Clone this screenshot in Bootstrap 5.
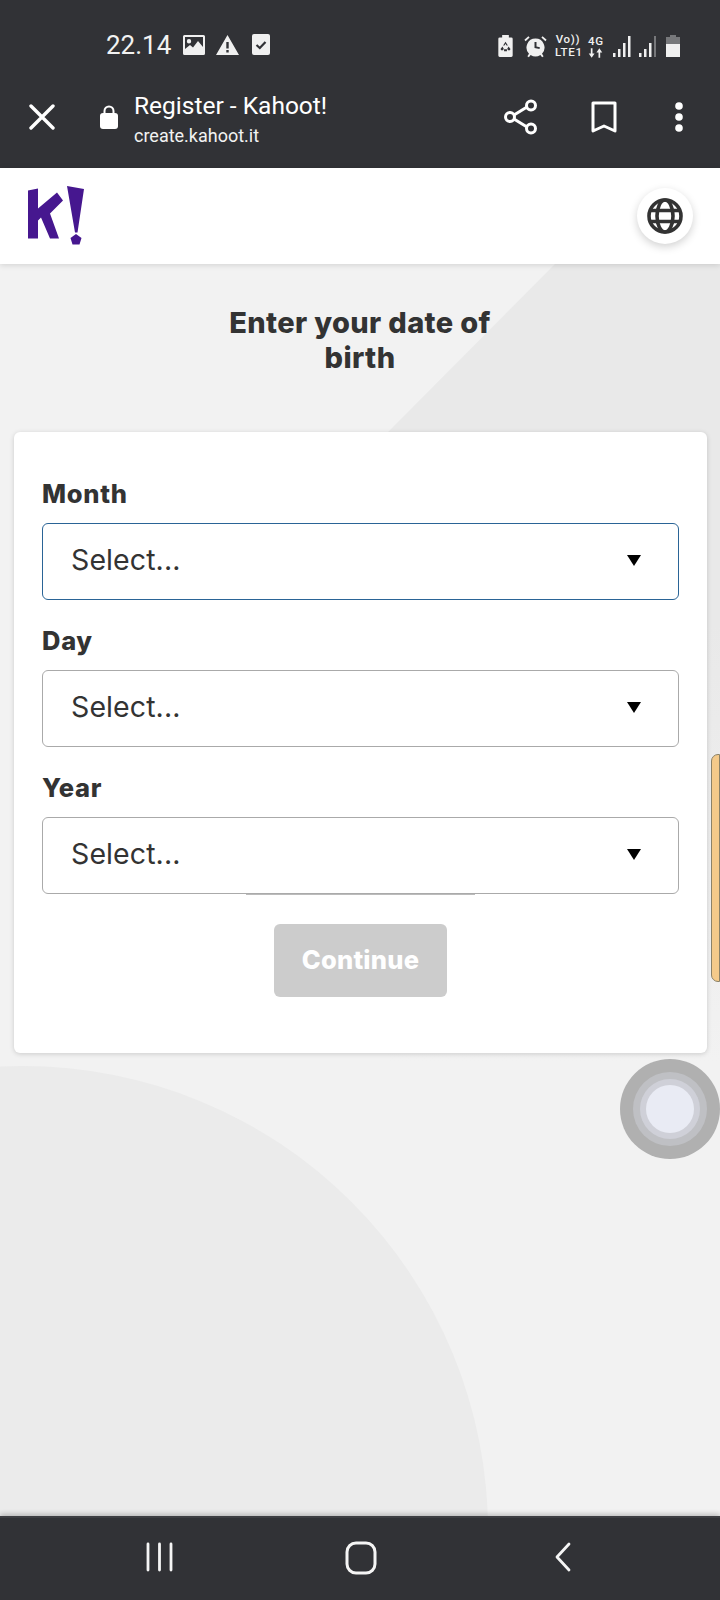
<!DOCTYPE html>
<html lang="en">
<head>
<meta charset="utf-8">
<title>Register - Kahoot!</title>
<link href="https://cdn.jsdelivr.net/npm/bootstrap@5.3.0/dist/css/bootstrap.min.css" rel="stylesheet">
<style>
html,body{margin:0;padding:0;background:#f2f2f2}
body{width:720px;height:1600px;overflow:hidden;font-family:Inter,"Liberation Sans",sans-serif;color:#333}
.phone-frame{width:720px;height:1600px;position:relative;overflow:hidden}
.dark-top{height:168px;background:#313236;color:#fff;font-family:Roboto,"Liberation Sans",sans-serif}
.status-row{height:84px;padding:25px 0 0 106px}
.status-time{font-size:26px;line-height:40px;color:#f2f2f2;width:68px}
.status-ic{display:block}
.browser-row{height:84px;padding-bottom:18px}
.b-title{font-size:24.5px;line-height:28px;color:#fff}
.b-sub{font-size:18px;line-height:22px;color:#f2f2f2;margin-top:5px}
.kh-header{height:96px;background:#fff;box-shadow:0 1px 6px rgba(0,0,0,.14);position:relative;z-index:3}
.globe-btn{width:56px;height:56px;border-radius:50%;background:#fff;box-shadow:0 3px 9px rgba(0,0,0,.18)}
.kh-main{height:1252px;position:relative;overflow:hidden;background:#f2f2f2}
.bg-tri{position:absolute;left:0;top:0;width:720px;height:800px}
.bg-circle{position:absolute;left:-442px;top:802px;width:930px;height:930px;border-radius:50%;background:#ebebeb}
.dob-title{position:relative;font-size:29px;font-weight:800;line-height:35px;text-align:center;width:300px;margin:0 auto;padding-top:41px;color:#333;letter-spacing:.35px}
.dob-card{position:absolute;left:14px;top:168px;width:693px;height:621px;background:#fff;border-radius:6px;box-shadow:0 1px 5px rgba(0,0,0,.16);padding:40px 28px 0}
.dob-label{font-size:25.5px;font-weight:800;line-height:44px;height:44px;color:#333;margin:0 0 7px;display:block;letter-spacing:.7px}
.dob-select{height:77px;border:1px solid #aaa;border-radius:6px;background:#fff;padding:0 28px 2px;margin-bottom:19px;font-size:28.5px;color:#333;letter-spacing:.1px}
.dob-select.is-on{border-color:#2a6496}
.dob-select.is-last{margin-bottom:0}
.dob-caret{width:0;height:0;border-left:7.5px solid transparent;border-right:7.5px solid transparent;border-top:11px solid #000;margin-right:9px}
.under-line{position:absolute;left:232px;top:462px;width:229px;height:1px;background:#bbb}
.dob-btn,.dob-btn:disabled{display:block;width:173px;height:73px;margin:30px auto 0;border:0;border-radius:6px;background:#ccc;color:#fff;font-size:25.5px;font-weight:800;padding:0;opacity:1;letter-spacing:.25px}
.edge-tab{position:absolute;right:0;top:490px;width:9px;height:228px;background:#f4ca8a;border:1px solid #8b8268;border-radius:7px 0 0 7px;z-index:4}
.assist{position:absolute;left:620px;top:795px;width:100px;height:100px;border-radius:50%;background:#b0b0b0;z-index:5}
.assist i{position:absolute;border-radius:50%;display:block}
.assist .r1{inset:13px;background:#bfc0c4}
.assist .r2{inset:20px;background:#cfd0d8}
.assist .r3{inset:26px;background:#e9ebf4}
.nav-sys{position:absolute;left:0;bottom:0;width:720px;height:84px;background:#313236;border-top:2px solid #3d3e42;box-shadow:0 -2px 5px rgba(0,0,0,.22);z-index:6}
.net-txt{color:#f0f0f0;font-size:11.5px;line-height:13px;font-weight:500;white-space:nowrap;text-align:center;letter-spacing:.7px}
</style>
</head>
<body>
<div class="phone-frame">
  <div class="dark-top">
    <div class="status-row d-flex align-items-start">
      <div class="status-time">22.14</div>
      <div class="d-flex align-items-center" style="gap:11px;margin:9px 0 0 9px">
        <svg class="status-ic" width="22" height="20" viewBox="0 0 22 20"><path fill="#f0f0f0" fill-rule="evenodd" d="M1.5 0h19A1.5 1.5 0 0 1 22 1.5v17a1.5 1.5 0 0 1-1.500 1.500h-19A1.500 1.500 0 0 1 0 18.500v-17A1.500 1.500 0 0 1 1.500 0ZM2 2v12l5-4 3 2.500L15 6l5 6V2ZM6 4a2.200 2.200 0 1 1 0 4.400A2.200 2.200 0 0 1 6 4Z"/></svg>
        <svg class="status-ic" width="23" height="20" viewBox="0 0 23 20"><path fill="#f0f0f0" fill-rule="evenodd" d="M11.500 0 23 20H0ZM10.300 7v6.500h2.400V7Zm0 8v2.400h2.400V15Z"/></svg>
        <svg class="status-ic" style="margin-left:2px" width="18" height="21" viewBox="0 0 18 21"><path fill="#f0f0f0" fill-rule="evenodd" d="M2 0h14a2 2 0 0 1 2 2v17a2 2 0 0 1-2 2H2a2 2 0 0 1-2-2V2a2 2 0 0 1 2-2Z"/><path fill="none" stroke="#313236" stroke-width="2.200" d="m4.500 11 3.300 3 5.700-6"/></svg>
      </div>
      <div class="d-flex align-items-center ms-auto" style="margin:8px 40px 0 0">
        <svg class="status-ic" width="15" height="22" viewBox="0 0 15 23"><path fill="#f0f0f0" d="M4 0h7v2.500h2.500A1.500 1.500 0 0 1 15 4v17.500a1.500 1.500 0 0 1-1.500 1.500h-12A1.500 1.500 0 0 1 0 21.500V4a1.500 1.500 0 0 1 1.500-1.500H4Z"/><path fill="#313236" d="M7.500 7 10 11H8.600L7.500 9.200 6.400 11H5ZM4.300 12l1.400 2.500-.8 1.500H3l-.7-1.300ZM10.700 12l2 2.700-.7 1.300h-1.900l-.8-1.500ZM6 15h3v2H6Z"/></svg>
        <svg class="status-ic" style="margin-left:11px" width="23" height="23" viewBox="0 0 23 23"><path fill="#f0f0f0" fill-rule="evenodd" d="M11.500 3.500a9 9 0 0 1 6.500 15.200l1.600 2.600-1.500.9-1.700-2.300a9 9 0 0 1-9.800 0l-1.700 2.300-1.500-.9L5 18.700A9 9 0 0 1 11.500 3.500Zm-1 3.500v6l5 1 .4-1.700-3.400-.7V7Z"/><path fill="none" stroke="#f0f0f0" stroke-width="1.800" d="M1 5.500 5 1.800M22 5.500 18 1.800"/></svg>
        <div class="net-txt" style="margin-left:8px;width:26px"><div>Vo))</div><div>LTE1</div></div>
        <div class="net-txt" style="margin-left:7px;width:15px"><div>4G</div><svg class="status-ic" width="15" height="10" viewBox="0 0 16 10"><path fill="#f0f0f0" d="M3 0h1.800v5.500H7L3.900 10 .8 5.500H3ZM11.200 10h1.800V4.500h2.200L12.100 0 9 4.500h2.200Z"/></svg></div>
        <svg class="status-ic" style="margin-left:10px" width="18" height="21" viewBox="0 0 18 21"><path fill="#f0f0f0" d="M0 17h2.500v4H0ZM5 13h2.500v8H5ZM10 7h2.500v14H10ZM15 0h2.500v21H15Z"/></svg>
        <svg class="status-ic" style="margin-left:8px" width="18" height="21" viewBox="0 0 18 21"><path fill="#f0f0f0" d="M0 17h2.500v4H0ZM5 13h2.500v8H5ZM10 7h2.500v14H10Z"/><path fill="#77787b" d="M15 0h2v21h-2Z"/></svg>
        <svg class="status-ic" style="margin-left:9px" width="14" height="22" viewBox="0 0 14 22"><path fill="#77787b" d="M4 0h6v2h4v7H0V2h4Z"/><path fill="#f0f0f0" d="M0 9h14v13H0Z"/></svg>
      </div>
    </div>
    <div class="browser-row d-flex align-items-center">
      <svg width="26" height="26" viewBox="0 0 26 26" style="margin-left:29px"><path stroke="#fff" stroke-width="3.400" stroke-linecap="round" d="M2 2l22 22M24 2 2 24"/></svg>
      <svg width="18" height="24" viewBox="0 0 18 24" style="margin-left:45px"><path fill="none" stroke="#fff" stroke-width="2" d="M4.500 9V6a4.500 4.500 0 0 1 9 0v3"/><rect y="8" width="18" height="16" rx="3" fill="#fff"/></svg>
      <div style="margin-left:16px;margin-top:4px">
        <div class="b-title">Register - Kahoot!</div>
        <div class="b-sub">create.kahoot.it</div>
      </div>
      <div class="ms-auto d-flex align-items-center" style="margin-right:37px">
        <svg width="34" height="36" viewBox="0 0 34 36"><g fill="none" stroke="#fff" stroke-width="3"><circle cx="27" cy="6.500" r="4.500"/><circle cx="6" cy="18" r="4.500"/><circle cx="27" cy="29.500" r="4.500"/><path d="m10 16 13-8M10 20l13 8"/></g></svg>
        <svg width="26" height="32" viewBox="0 0 26 32" style="margin-left:53px"><path fill="none" stroke="#fff" stroke-width="3" stroke-linejoin="round" d="M2 2h22v28l-11-5-11 5Z"/></svg>
        <svg width="8" height="30" viewBox="0 0 8 30" style="margin-left:58px"><circle cx="4" cy="4" r="3.800" fill="#fff"/><circle cx="4" cy="15" r="3.800" fill="#fff"/><circle cx="4" cy="26" r="3.800" fill="#fff"/></svg>
      </div>
    </div>
  </div>

  <header class="kh-header d-flex align-items-center justify-content-between">
    <svg width="58" height="60" viewBox="0 0 58 60" style="margin-left:27px" role="img" aria-label="Kahoot logo"><path fill="#46178f" d="M1 4.500 11 2.500V22.500L30 6.500 36 14.500 23 27.500 32 52.500H23L14 31.500 11 34.500V52.500H1Z"/><path fill="#46178f" d="M40 0 57 3 50.500 46.500H48ZM49 48l5.500 4-2 6.500h-7l-2-6.500Z"/></svg>
    <div class="globe-btn d-flex align-items-center justify-content-center" style="margin-right:27px">
      <svg width="36" height="36" viewBox="0 0 36 36"><g fill="none" stroke="#333" stroke-width="3.600"><circle cx="18" cy="18" r="16"/><ellipse cx="18" cy="18" rx="8" ry="16"/><path d="M3 12.500h30M3 23.500h30"/></g></svg>
    </div>
  </header>

  <main class="kh-main">
    <svg class="bg-tri" viewBox="0 0 720 800" aria-hidden="true"><defs><linearGradient id="triFade" x1="0" y1="0" x2="0" y2="1"><stop offset=".45" stop-color="#e9e9e9"/><stop offset="1" stop-color="#f2f2f2"/></linearGradient></defs><path fill="url(#triFade)" d="M555 0H720V800H388V168Z"/></svg>
    <div class="bg-circle"></div>
    <h1 class="dob-title">Enter your date of birth</h1>
    <section class="dob-card">
      <label class="dob-label">Month</label>
      <div class="dob-select is-on d-flex align-items-center justify-content-between"><span>Select...</span><span class="dob-caret"></span></div>
      <label class="dob-label">Day</label>
      <div class="dob-select d-flex align-items-center justify-content-between"><span>Select...</span><span class="dob-caret"></span></div>
      <label class="dob-label">Year</label>
      <div class="dob-select is-last d-flex align-items-center justify-content-between"><span>Select...</span><span class="dob-caret"></span></div>
      <div class="under-line"></div>
      <button class="btn dob-btn" type="button" disabled>Continue</button>
    </section>
    <div class="edge-tab"></div>
    <div class="assist"><i class="r1"></i><i class="r2"></i><i class="r3"></i></div>
  </main>

  <nav class="nav-sys">
    <svg class="position-absolute" style="left:146px;top:24px" width="28" height="30" viewBox="0 0 28 30"><path stroke="#f5f5f5" stroke-width="2.800" stroke-linecap="round" d="M2 2v26M13.500 2v26M25 2v26"/></svg>
    <svg class="position-absolute" style="left:345px;top:23px" width="32" height="34" viewBox="0 0 32 34"><rect x="2" y="2" width="28" height="30" rx="9" fill="none" stroke="#f5f5f5" stroke-width="3"/></svg>
    <svg class="position-absolute" style="left:553px;top:24px" width="20" height="30" viewBox="0 0 20 30"><path fill="none" stroke="#f5f5f5" stroke-width="2.800" stroke-linecap="round" stroke-linejoin="round" d="M16 2 4 15l12 13"/></svg>
  </nav>
</div>
<script src="https://cdn.jsdelivr.net/npm/bootstrap@5.3.0/dist/js/bootstrap.bundle.min.js"></script>
</body>
</html>
